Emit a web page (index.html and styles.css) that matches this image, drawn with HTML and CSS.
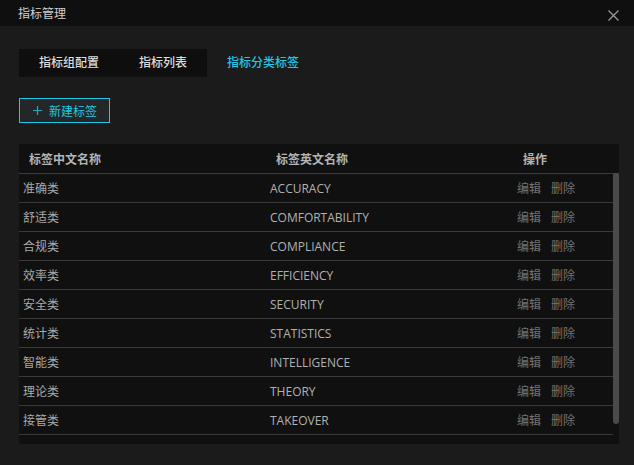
FILE: index.html
```html
<!DOCTYPE html>
<html lang="zh-CN">
<head>
<meta charset="utf-8">
<title>指标管理</title>
<link rel="stylesheet" href="styles.css">
</head>
<body>
<div class="modal">
  <div class="titlebar">
    <span class="title">指标管理</span>
    <svg class="close" width="11" height="11" viewBox="0 0 11 11"><path d="M0.5 0.5 L10.5 10.5 M10.5 0.5 L0.5 10.5" stroke="#9a9a9a" stroke-width="1.3" fill="none"/></svg>
  </div>
  <div class="content">
    <div class="tabs">
      <div class="tab-group">
        <span class="tab">指标组配置</span>
        <span class="tab">指标列表</span>
      </div>
      <span class="tab active">指标分类标签</span>
    </div>
    <button class="btn-add"><svg class="plus" width="9" height="9" viewBox="0 0 9 9"><path d="M4.5 0 V9 M0 4.5 H9" stroke="#1ea9c0" stroke-width="1.2" fill="none"/></svg>新建标签</button>
    <div class="table">
      <div class="thead">
        <div class="th">标签中文名称</div>
        <div class="th">标签英文名称</div>
        <div class="th">操作</div>
      </div>
      <div class="tbody">
        <div class="rows">
          <div class="row"><div class="td">准确类</div><div class="td en">ACCURACY</div><div class="td ops"><span>编辑</span><span>删除</span></div></div>
          <div class="row"><div class="td">舒适类</div><div class="td en">COMFORTABILITY</div><div class="td ops"><span>编辑</span><span>删除</span></div></div>
          <div class="row"><div class="td">合规类</div><div class="td en">COMPLIANCE</div><div class="td ops"><span>编辑</span><span>删除</span></div></div>
          <div class="row"><div class="td">效率类</div><div class="td en">EFFICIENCY</div><div class="td ops"><span>编辑</span><span>删除</span></div></div>
          <div class="row"><div class="td">安全类</div><div class="td en">SECURITY</div><div class="td ops"><span>编辑</span><span>删除</span></div></div>
          <div class="row"><div class="td">统计类</div><div class="td en">STATISTICS</div><div class="td ops"><span>编辑</span><span>删除</span></div></div>
          <div class="row"><div class="td">智能类</div><div class="td en">INTELLIGENCE</div><div class="td ops"><span>编辑</span><span>删除</span></div></div>
          <div class="row"><div class="td">理论类</div><div class="td en">THEORY</div><div class="td ops"><span>编辑</span><span>删除</span></div></div>
          <div class="row"><div class="td">接管类</div><div class="td en">TAKEOVER</div><div class="td ops"><span>编辑</span><span>删除</span></div></div>
        </div>
        <div class="scrollbar"><div class="thumb"></div></div>
      </div>
    </div>
  </div>
</div>
</body>
</html>
```
FILE: styles.css
```css
* { box-sizing: border-box; }
html, body { margin: 0; padding: 0; background: #1b1b1b; }
body {
  font-family: "Open Sans", "Noto Sans CJK SC", sans-serif;
  font-size: 12px;
}
.modal {
  width: 634px;
  height: 465px;
  background: #1b1b1b;
  overflow: hidden;
}
.titlebar {
  height: 26px;
  background: #0f0f0f;
  display: flex;
  align-items: center;
  justify-content: space-between;
  padding: 0 15px 0 18px;
}
.title {
  color: #cfcfcf;
  font-size: 12px;
  line-height: 26px;
  margin-top: 1px;
}
.close { margin-top: 4px; }
.content {
  padding: 23px 15px 0 19px;
}
.tabs {
  display: flex;
  height: 28px;
}
.tab-group {
  display: flex;
  background: #0e0e0e;
}
.tab {
  padding: 0 20px;
  line-height: 28px;
  color: #dcdcdc;
  font-size: 12px;
  font-weight: 500;
}
.tab.active { color: #1ec8e6; }
.btn-add {
  margin-top: 21px;
  width: 91px;
  height: 25px;
  background: #242627;
  border: 1px solid #1ec8e6;
  color: #1ec8e6;
  font-family: inherit;
  font-size: 12px;
  padding: 0 0 0 13px;
  display: flex;
  align-items: center;
  gap: 7px;
}
.plus { margin-top: -1px; }
.table {
  margin-top: 21px;
  width: 600px;
  background: #101010;
}
.thead {
  display: grid;
  grid-template-columns: 247px 247px 1fr;
  height: 30px;
  border-bottom: 1px solid #3d3d3d;
  align-items: center;
}
.th {
  padding-left: 10px;
  color: #b4b4b4;
  font-weight: 700;
}
.tbody {
  display: flex;
  height: 270px;
}
.rows { flex: 1; }
.row {
  display: grid;
  grid-template-columns: 247px 247px 1fr;
  height: 29px;
  border-bottom: 1px solid #3a3a3a;
  align-items: center;
}
.td {
  padding-left: 4px;
  color: #a9a9a9;
}
.td.en { color: #b0b0b0; }
.ops {
  display: flex;
  gap: 10px;
  color: #737373;
}
.scrollbar {
  width: 6px;
  margin-top: -1px;
}
.thumb {
  height: 251px;
  background: #4a4a4a;
  border-radius: 2px 2px 3px 3px;
}
```
